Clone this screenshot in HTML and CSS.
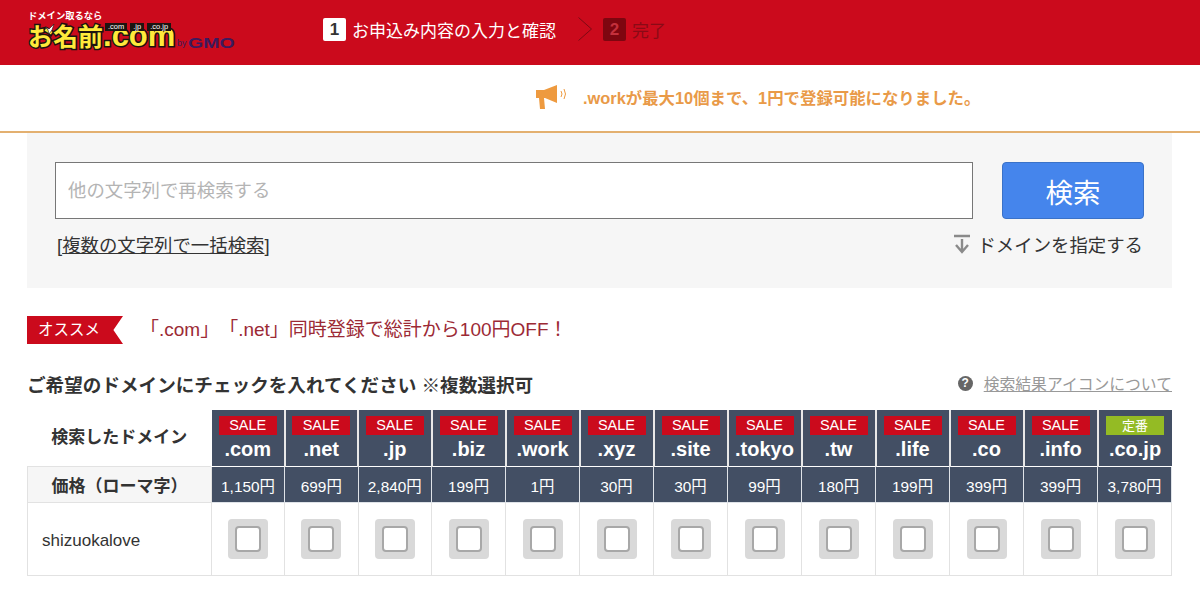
FILE: index.html
```html
<!DOCTYPE html>
<html lang="ja">
<head>
    <meta charset="UTF-8">
    <meta name="viewport" content="width=device-width, initial-scale=1.0">
    <title>お名前.com</title>
    <link rel="stylesheet" href="styles.css">
</head>
<body>
    <!-- ヘッダー -->
    <header class="site-header">
        <div class="logo">
            <div class="logo-catch">ドメイン取るなら</div>
            <div class="logo-main">
                <span class="logo-name"><span class="logo-kanji">お名前</span>.com</span>
                <svg class="logo-bird" width="12" height="12" viewBox="0 0 12 12">
                    <path d="M1 4l4 2 5-5-2 6-3 4-1-4z" fill="#fff" stroke="#1c1410" stroke-width="0.6"/>
                </svg>
                <span class="logo-tlds"><i>.com</i><i>.jp</i><i>.co.jp</i></span>
                <span class="logo-by"><small>by</small><span class="logo-gmo">GMO</span></span>
            </div>
        </div>
        <ol class="steps">
            <li class="step step-on"><b>1</b>お申込み内容の入力と確認</li>
            <li class="step-arrow">
                <svg width="14" height="24" viewBox="0 0 14 24">
                    <path d="M0.5 0.5L13.5 12L0.5 23.5" fill="none" stroke="#7e0a14" stroke-width="1"/>
                </svg>
            </li>
            <li class="step step-off"><b>2</b>完了</li>
        </ol>
    </header>

    <div class="notice">
        <svg class="notice-icon" width="36" height="26" viewBox="0 0 36 26">
            <path d="M1 6h8L22 1v18L10 14H9l1 11H5L4 14H1z" fill="#ee9a3f"/>
            <path d="M26 7q2 3 0 6M29 5q3 5 0 10" fill="none" stroke="#ee9a3f" stroke-width="1"/>
        </svg>
        <span>.workが最大10個まで、1円で登録可能になりました。</span>
    </div>

    <!-- 検索 -->
    <section class="search-box">
        <div class="search-row">
            <input class="search-input" type="text" placeholder="他の文字列で再検索する">
            <button class="search-button" type="button">検索</button>
        </div>
        <div class="search-links">
            <a class="bulk-link" href="#">[<u>複数の文字列で一括検索</u>]</a>
            <a class="tld-link" href="#">
                <svg width="18" height="20" viewBox="0 0 18 20">
                    <path d="M1 2h16M9 5v13M3 11l6 7 6-7" fill="none" stroke="#8a8a8a" stroke-width="2.4"/>
                </svg>
                ドメインを指定する
            </a>
        </div>
    </section>

    <div class="recommend">
        <span class="ribbon">オススメ</span>
        <span class="recommend-text">「.com」「.net」同時登録で総計から100円OFF！</span>
    </div>

    <div class="table-head">
        <h2>ご希望のドメインにチェックを入れてください ※複数選択可</h2>
        <a class="help-link" href="#"><span class="help-mark">?</span><u>検索結果アイコンについて</u></a>
    </div>

    <table class="domain-table">
        <tr class="row-tld">
            <th class="label-plain">検索したドメイン</th>
            <th><span class="tag">SALE</span>.com</th>
            <th><span class="tag">SALE</span>.net</th>
            <th><span class="tag">SALE</span>.jp</th>
            <th><span class="tag">SALE</span>.biz</th>
            <th><span class="tag">SALE</span>.work</th>
            <th><span class="tag">SALE</span>.xyz</th>
            <th><span class="tag">SALE</span>.site</th>
            <th><span class="tag">SALE</span>.tokyo</th>
            <th><span class="tag">SALE</span>.tw</th>
            <th><span class="tag">SALE</span>.life</th>
            <th><span class="tag">SALE</span>.co</th>
            <th><span class="tag">SALE</span>.info</th>
            <th><span class="tag tag-green">定番</span>.co.jp</th>
        </tr>
        <tr class="row-price">
            <th class="label-gray">価格（ローマ字）</th>
            <td>1,150円</td>
            <td>699円</td>
            <td>2,840円</td>
            <td>199円</td>
            <td>1円</td>
            <td>30円</td>
            <td>30円</td>
            <td>99円</td>
            <td>180円</td>
            <td>199円</td>
            <td>399円</td>
            <td>399円</td>
            <td>3,780円</td>
        </tr>
        <tr class="row-check">
            <td class="domain-name">shizuokalove</td>
            <td><span class="check"></span></td>
            <td><span class="check"></span></td>
            <td><span class="check"></span></td>
            <td><span class="check"></span></td>
            <td><span class="check"></span></td>
            <td><span class="check"></span></td>
            <td><span class="check"></span></td>
            <td><span class="check"></span></td>
            <td><span class="check"></span></td>
            <td><span class="check"></span></td>
            <td><span class="check"></span></td>
            <td><span class="check"></span></td>
            <td><span class="check"></span></td>
        </tr>
    </table>
</body>
</html>
```

FILE: styles.css
```css
body {
    margin: 0;
    background-color: #fff;
    color: #333;
    font-family: 'Liberation Sans', 'Noto Sans CJK JP', sans-serif;
    font-size: 16px;
}
a {
    color: inherit;
    text-decoration: none;
}

/* ヘッダー */
.site-header {
    display: flex;
    height: 65px;
    background-color: #cb0a1c;
    padding-left: 28px;
    box-sizing: border-box;
}
.logo {
    width: 295px;
    padding-top: 11px;
    box-sizing: border-box;
}
.logo-catch {
    color: #fff;
    font-size: 9.3px;
    font-weight: bold;
    line-height: 11px;
}
.logo-main {
    position: relative;
    height: 30px;
}
.logo-name {
    position: absolute;
    top: -1px;
    left: 0;
    color: #ffe93b;
    font-size: 31px;
    font-weight: bold;
    line-height: 30px;
    -webkit-text-stroke: 3px #1c1410;
    paint-order: stroke fill;
    white-space: nowrap;
}
.logo-kanji {
    font-size: 25px;
}
.logo-bird {
    position: absolute;
    top: 1px;
    left: 16px;
}
.logo-tlds {
    position: absolute;
    top: 1px;
    left: 77px;
    display: flex;
    gap: 3px;
}
.logo-tlds i {
    background-color: #1c1410;
    color: #fff;
    font-size: 7.5px;
    font-style: normal;
    line-height: 8px;
    padding: 0 3px;
}
.logo-by {
    position: absolute;
    top: 14px;
    left: 149px;
    display: flex;
    align-items: flex-end;
    color: #3d1a5c;
    line-height: 14px;
    white-space: nowrap;
}
.logo-by small {
    font-size: 9px;
}
.logo-gmo {
    margin-left: 1px;
    font-size: 14px;
    font-weight: bold;
    transform: scaleX(1.4);
    transform-origin: left;
}
.steps {
    display: flex;
    align-items: center;
    list-style: none;
    margin: 0;
    padding: 0 0 7px;
}
.step {
    display: flex;
    align-items: center;
    gap: 6px;
    font-size: 17px;
}
.step b {
    width: 23px;
    height: 23px;
    border-radius: 2px;
    font-size: 17px;
    line-height: 23px;
    text-align: center;
}
.step-on {
    color: #fff;
}
.step-on b {
    background-color: #fff;
    color: #333;
}
.step-off {
    color: #8a0a16;
}
.step-off b {
    background-color: #7e0610;
    color: #c4303c;
}
.step-arrow {
    display: flex;
    margin: 0 11px 0 22px;
}

/* お知らせ */
.notice {
    display: flex;
    align-items: center;
    gap: 12px;
    height: 68px;
    padding: 0 0 3px 535px;
    box-sizing: border-box;
    border-bottom: 2px solid #e3b070;
    color: #e99a48;
    font-size: 16.4px;
    font-weight: bold;
}

/* 検索 */
.search-box {
    width: 1145px;
    height: 155px;
    margin: 0 0 0 27px;
    padding: 29px 28px 0;
    box-sizing: border-box;
    background-color: #f6f6f6;
}
.search-row {
    display: flex;
    justify-content: space-between;
}
.search-input {
    width: 918px;
    height: 57px;
    padding: 0 12px;
    box-sizing: border-box;
    border: 1px solid #777;
    background-color: #fff;
    font-family: inherit;
    font-size: 18.4px;
}
.search-input::placeholder {
    color: #b4b4b4;
}
.search-button {
    width: 142px;
    height: 57px;
    border: 1px solid #3a72c8;
    border-radius: 4px;
    background-color: #4585ec;
    color: #fff;
    font-family: inherit;
    font-size: 27.5px;
}
.search-links {
    display: flex;
    justify-content: space-between;
    align-items: center;
    margin-top: 12px;
    padding-left: 2px;
    font-size: 18.4px;
}
.tld-link {
    display: flex;
    align-items: center;
    gap: 6px;
    margin-right: 1px;
}

/* オススメ */
.recommend {
    display: flex;
    align-items: center;
    gap: 17px;
    margin: 28px 0 0 27px;
}
.ribbon {
    width: 96px;
    height: 28px;
    padding-left: 11px;
    box-sizing: border-box;
    background-color: #cb0a1c;
    clip-path: polygon(0 0, 100% 0, 90% 50%, 100% 100%, 0 100%);
    color: #fff;
    font-size: 15.5px;
    line-height: 28px;
}
.recommend-text {
    color: #9c2a35;
    font-size: 19px;
    line-height: 26px;
    text-spacing-trim: space-all;
    font-feature-settings: "chws" 0;
}

.table-head {
    display: flex;
    justify-content: space-between;
    align-items: center;
    width: 1145px;
    margin: 27px 0 0 27px;
    height: 24px;
}
.table-head h2 {
    margin: 0;
    font-size: 18.6px;
    font-weight: bold;
}
.help-link {
    display: flex;
    align-items: center;
    gap: 11px;
    color: #999;
    font-size: 15.8px;
}
.help-mark {
    width: 15px;
    height: 15px;
    border-radius: 50%;
    background-color: #666;
    color: #fff;
    font-size: 12px;
    font-weight: bold;
    line-height: 15px;
    text-align: center;
}

/* ドメイン一覧 */
.domain-table {
    width: 1145px;
    margin: 15px 0 0 27px;
    table-layout: fixed;
    border-collapse: collapse;
}
.domain-table th,
.domain-table td {
    padding: 0;
    text-align: center;
    border: 1px solid #e2e2e2;
}
.domain-table th:first-child,
.domain-table td:first-child {
    width: 184px;
    box-sizing: border-box;
}
.row-tld th:nth-child(n+2):nth-child(-n+4) {
    width: 71.5px;
}
.row-tld th {
    height: 56px;
    background-color: #434f64;
    border: 1px solid #fff;
    border-top: 0;
    border-right: 2px solid #e8e8e8;
    color: #fff;
    font-size: 20px;
    line-height: 22px;
}
.row-tld th:last-child {
    border-right: 0;
}
.row-tld .label-plain {
    background-color: #fff;
    border: 0;
    color: #333;
    font-size: 17px;
}
.tag {
    display: block;
    width: 58px;
    height: 19px;
    margin: 0 auto 3px;
    background-color: #cb0a1c;
    color: #fff;
    font-size: 14.5px;
    font-weight: normal;
    line-height: 19px;
}
.tag-green {
    background-color: #94bb24;
    font-size: 13px;
}
.row-price th,
.row-price td {
    height: 36px;
    box-sizing: border-box;
}
.row-price td {
    background-color: #434f64;
    border-color: #dfe3e8;
    color: #fff;
    font-size: 15.4px;
}
.row-price .label-gray {
    background-color: #f6f6f6;
    color: #333;
    font-size: 17px;
}
.row-check td {
    height: 72px;
}
.row-check .domain-name {
    padding: 3px 0 0 14px;
    text-align: left;
    font-size: 17px;
}
.check {
    display: block;
    width: 40px;
    height: 40px;
    margin: 0 auto;
    padding: 7px;
    box-sizing: border-box;
    border-radius: 4px;
    background-color: #d9d9d9;
}
.check:before {
    content: '';
    display: block;
    width: 26px;
    height: 26px;
    box-sizing: border-box;
    border: 2px solid #a8a8a8;
    border-radius: 4px;
    background-color: #fff;
}
```
